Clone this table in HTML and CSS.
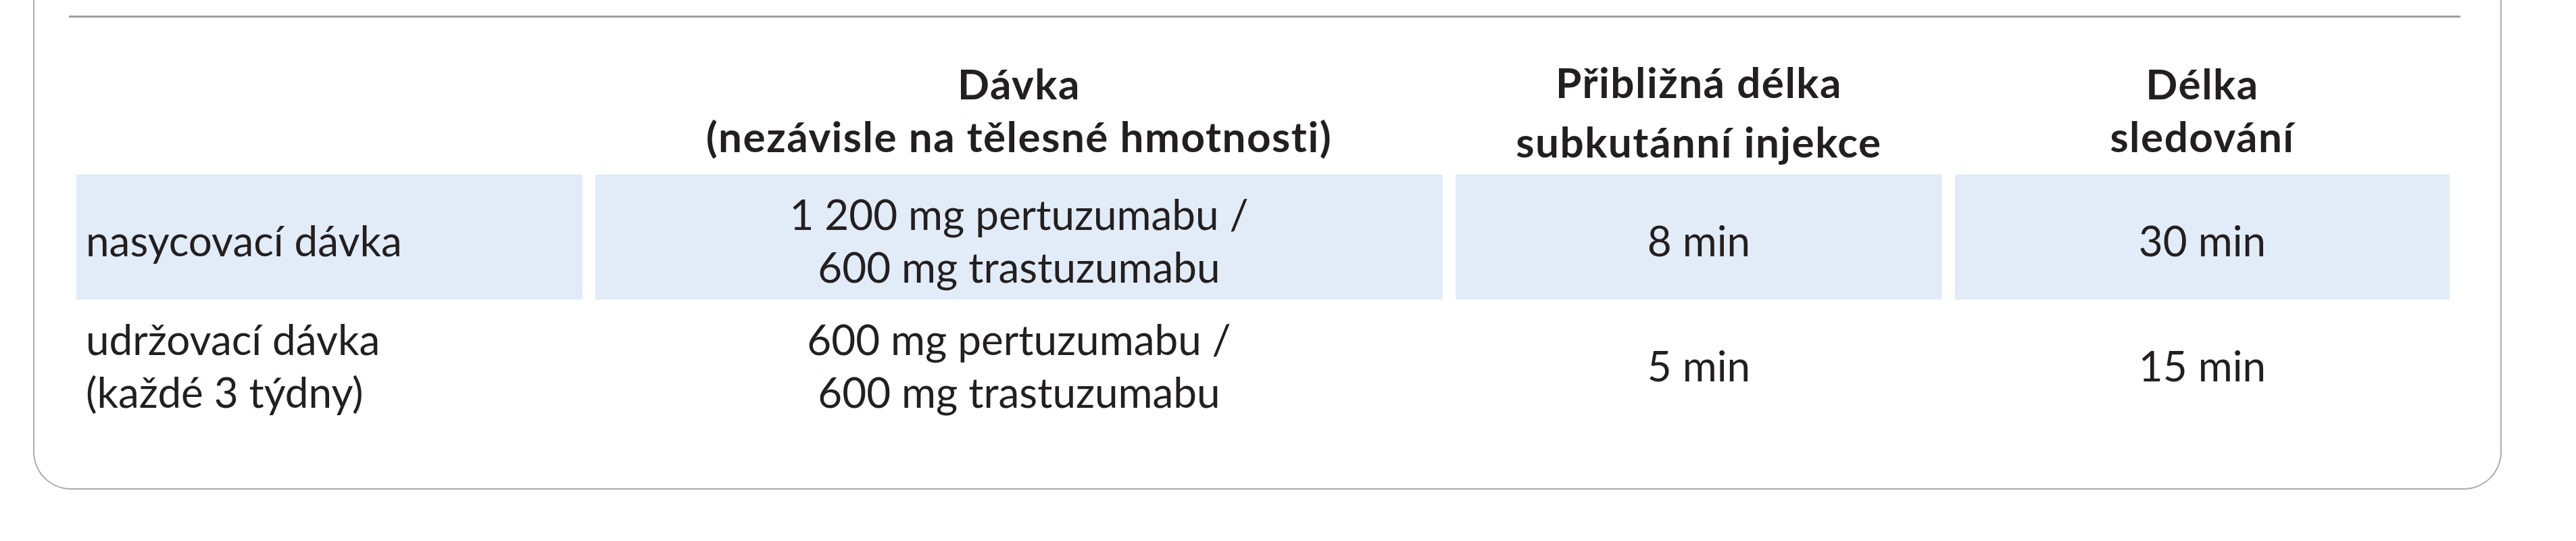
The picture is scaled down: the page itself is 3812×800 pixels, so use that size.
FILE: index.html
```html
<!DOCTYPE html>
<html lang="cs">
<head>
<meta charset="utf-8">
<title>Dávkování</title>
<link rel="stylesheet" href="styles.css">
</head>
<body>
<div class="panel">
  <div class="panel-inner">
    <div class="dose-table">
      <div class="cell head"></div>
      <div class="cell head center">Dávka<br>(nezávisle na tělesné hmotnosti)</div>
      <div class="cell head center head-tall">Přibližná délka<br>subkutánní injekce</div>
      <div class="cell head center">Délka<br>sledování</div>

      <div class="cell shaded">nasycovací dávka</div>
      <div class="cell shaded center">1 200 mg pertuzumabu /<br>600 mg trastuzumabu</div>
      <div class="cell shaded center">8 min</div>
      <div class="cell shaded center">30 min</div>

      <div class="cell">udržovací dávka<br>(každé 3 týdny)</div>
      <div class="cell center">600 mg pertuzumabu /<br>600 mg trastuzumabu</div>
      <div class="cell center">5 min</div>
      <div class="cell center">15 min</div>
    </div>
  </div>
</div>
</body>
</html>
```
FILE: styles.css
```css
html, body {
  margin: 0;
  padding: 0;
  background: #ffffff;
}

body {
  font-family: Lato, "Noto Sans", "Liberation Sans", sans-serif;
  color: #231f20;
  font-size: 62px;
  line-height: 78px;
}

.panel {
  margin: 0 110px 0 49px;
  border: 2px solid #ababab;
  border-top: 0;
  border-radius: 0 0 56px 56px;
  padding: 23px 59px 94px 51px;
}

.panel-inner {
  border-top: 3px solid #9d9d9d;
}

.dose-table {
  display: grid;
  grid-template-columns: 749fr 1254fr 720fr 732fr;
  column-gap: 19px;
  margin: 0 16px 0 11px;
}

.cell {
  display: flex;
  flex-direction: column;
  justify-content: center;
  padding: 19px 14px 10px 14px;
}

.cell.center {
  text-align: center;
  align-items: center;
}

.cell.head {
  font-weight: 700;
  letter-spacing: 1.5px;
  justify-content: flex-end;
  padding-top: 58px;
  padding-bottom: 18px;
}

.cell.head-tall {
  line-height: 88px;
  padding-top: 51px;
  padding-bottom: 5px;
}

.cell.shaded {
  background: #e2ecf8;
}
```
